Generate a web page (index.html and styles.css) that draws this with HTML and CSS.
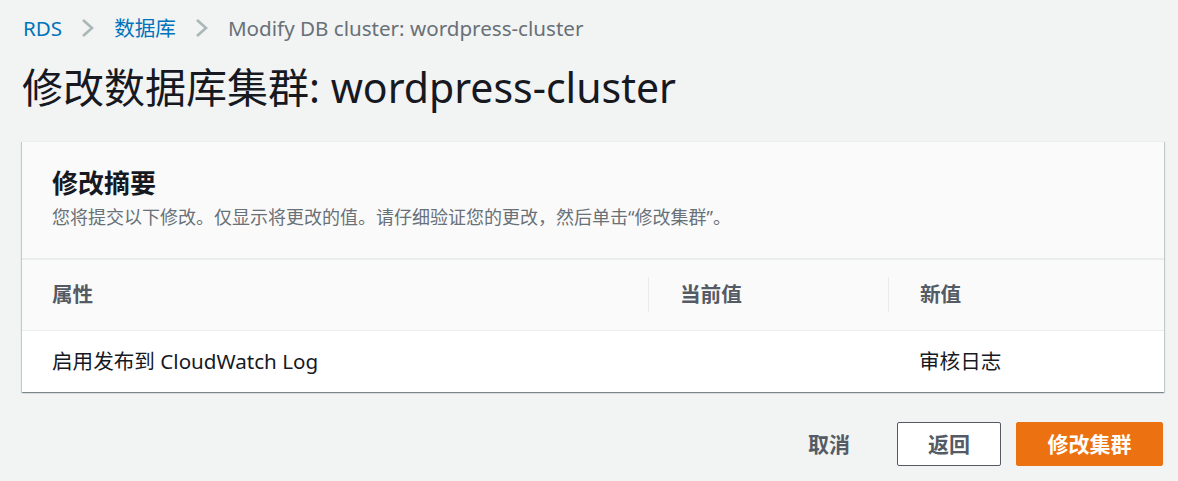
FILE: index.html
```html
<!DOCTYPE html>
<html lang="zh-CN">
<head>
<meta charset="utf-8">
<title>修改数据库集群</title>
<link rel="stylesheet" href="styles.css">
</head>
<body>
<div class="page">
  <nav class="breadcrumbs">
    <a class="crumb-link" href="#">RDS</a>
    <svg class="chev" viewBox="0 0 14 20" width="14" height="20"><path d="M2 2 L11 10 L2 18" fill="none" stroke="#aab7b8" stroke-width="2.6"/></svg>
    <a class="crumb-link" href="#">数据库</a>
    <svg class="chev" viewBox="0 0 14 20" width="14" height="20"><path d="M2 2 L11 10 L2 18" fill="none" stroke="#aab7b8" stroke-width="2.6"/></svg>
    <span class="crumb-current">Modify DB cluster: wordpress-cluster</span>
  </nav>
  <h1 class="title">修改数据库集群: wordpress-cluster</h1>
  <section class="card">
    <header class="card-header">
      <h2 class="card-title">修改摘要</h2>
      <p class="card-desc">您将提交以下修改。仅显示将更改的值。请仔细验证您的更改，然后单击“修改集群”。</p>
    </header>
    <table class="summary">
      <colgroup>
        <col class="c1"><col class="c2"><col class="c3">
      </colgroup>
      <thead>
        <tr>
          <th><div class="th-in first">属性</div></th>
          <th><div class="th-in">当前值</div></th>
          <th><div class="th-in">新值</div></th>
        </tr>
      </thead>
      <tbody>
        <tr>
          <td class="td-first">启用发布到 CloudWatch Log</td>
          <td></td>
          <td class="td-new">审核日志</td>
        </tr>
      </tbody>
    </table>
  </section>
  <div class="actions">
    <button class="btn btn-link">取消</button>
    <button class="btn btn-normal">返回</button>
    <button class="btn btn-primary">修改集群</button>
  </div>
</div>
</body>
</html>
```

FILE: styles.css
```css
* { box-sizing: border-box; }
html, body { margin: 0; padding: 0; }
body {
  background: #f2f3f3;
  font-family: "Noto Sans", "Noto Sans CJK SC", sans-serif;
  color: #16191f;
}
.page {
  padding: 0 14px 0 22px;
}
.breadcrumbs {
  display: flex;
  align-items: center;
  height: 30px;
  margin-top: 13px;
  font-size: 20.6px;
  line-height: 30px;
  padding-left: 1px;
}
.crumb-link {
  color: #0073bb;
  text-decoration: none;
}
.chev {
  margin: 0 19px 0 19px;
  display: block;
}
.crumb-current {
  color: #687078;
}
.title {
  margin: 19px 0 0 0;
  font-size: 41px;
  line-height: 50px;
  font-weight: 400;
  color: #16191f;
  height: 50px;
}
.card {
  margin-top: 29px;
  background: #fafafa;
  box-shadow: 0 1px 1px 0 rgba(0,28,36,.3), 1px 1px 1px 0 rgba(0,28,36,.15), -1px 1px 1px 0 rgba(0,28,36,.15);
  border-top: 1px solid #eaeded;
}
.card-header {
  padding: 24px 30px 29px 30px;
  border-bottom: 2px solid #eaeded;
}
.card-title {
  margin: 0;
  font-size: 26px;
  line-height: 34px;
  font-weight: 700;
  color: #16191f;
}
.card-desc {
  margin: 5px 0 0 0;
  font-size: 18px;
  line-height: 24px;
  color: #687078;
}
.summary {
  width: 100%;
  border-collapse: collapse;
  table-layout: fixed;
}
.c1 { width: 626px; }
.c2 { width: 240px; }
.c3 { width: auto; }
.summary th {
  padding: 17px 0 18px 0;
  border-bottom: 1px solid #eaeded;
  text-align: left;
  background: #fafafa;
}
.th-in {
  height: 35px;
  line-height: 35px;
  font-size: 20.6px;
  font-weight: 700;
  color: #545b64;
  border-left: 1px solid #eaeded;
  padding-left: 31px;
}
.th-in.first {
  border-left: none;
  padding-left: 30px;
}
.summary td {
  background: #ffffff;
  height: 61px;
  padding: 0;
  font-size: 20.6px;
  line-height: 24px;
  color: #16191f;
  vertical-align: middle;
}
.td-first { padding-left: 30px !important; }
.td-new { padding-left: 31px !important; }
.actions {
  display: flex;
  justify-content: flex-end;
  align-items: center;
  margin-top: 30px;
  padding-right: 1px;
  gap: 15px;
}
.btn {
  font-family: "Noto Sans", "Noto Sans CJK SC", sans-serif;
  font-size: 21px;
  font-weight: 700;
  height: 44px;
  line-height: 42px;
  padding: 0 30px;
  border-radius: 2px;
  border: 1px solid transparent;
  background: transparent;
  color: #545b64;
  cursor: pointer;
}
.btn-link {
  padding: 0 31px;
}
.btn-normal {
  background: #ffffff;
  border-color: #545b64;
  width: 104px;
  padding: 0;
}
.btn-primary {
  background: #ec7211;
  border-color: #ec7211;
  color: #ffffff;
  width: 147px;
  padding: 0;
}
```
